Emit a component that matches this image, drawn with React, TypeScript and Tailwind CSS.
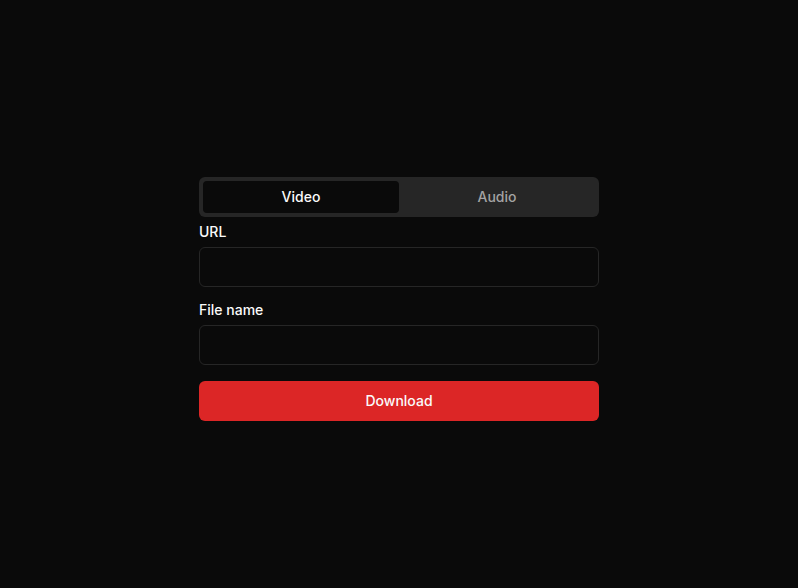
import React, { useState } from "react";

export default function App() {
  const [tab, setTab] = useState<"video" | "audio">("video");
  return (
    <div
      className="min-h-screen w-full bg-[#0a0a0a] text-[#fafafa]"
      style={{ fontFamily: "Inter, 'Noto Sans', sans-serif" }}
    >
      <div className="mx-auto w-[400px] pt-[177px]">
        <div className="grid h-10 grid-cols-2 items-center rounded-md bg-[#262626] p-1 text-sm font-medium">
          <button
            onClick={() => setTab("video")}
            className={`h-8 rounded-[4px] ${tab === "video" ? "bg-[#0a0a0a] text-[#fafafa]" : "text-[#a3a3a3]"}`}
          >
            Video
          </button>
          <button
            onClick={() => setTab("audio")}
            className={`h-8 rounded-[4px] ${tab === "audio" ? "bg-[#0a0a0a] text-[#fafafa]" : "text-[#a3a3a3]"}`}
          >
            Audio
          </button>
        </div>
        <div className="mt-2 flex flex-col gap-4">
          <div className="flex flex-col gap-2">
            <label className="text-sm font-medium leading-none">URL</label>
            <input className="h-10 w-full rounded-md border border-[#262626] bg-[#0a0a0a] px-3 text-sm outline-none" />
          </div>
          <div className="flex flex-col gap-2">
            <label className="text-sm font-medium leading-none">File name</label>
            <input className="h-10 w-full rounded-md border border-[#262626] bg-[#0a0a0a] px-3 text-sm outline-none" />
          </div>
          <button className="h-10 w-full rounded-md bg-[#dc2626] text-sm font-medium text-[#fafafa]">
            Download
          </button>
        </div>
      </div>
    </div>
  );
}
